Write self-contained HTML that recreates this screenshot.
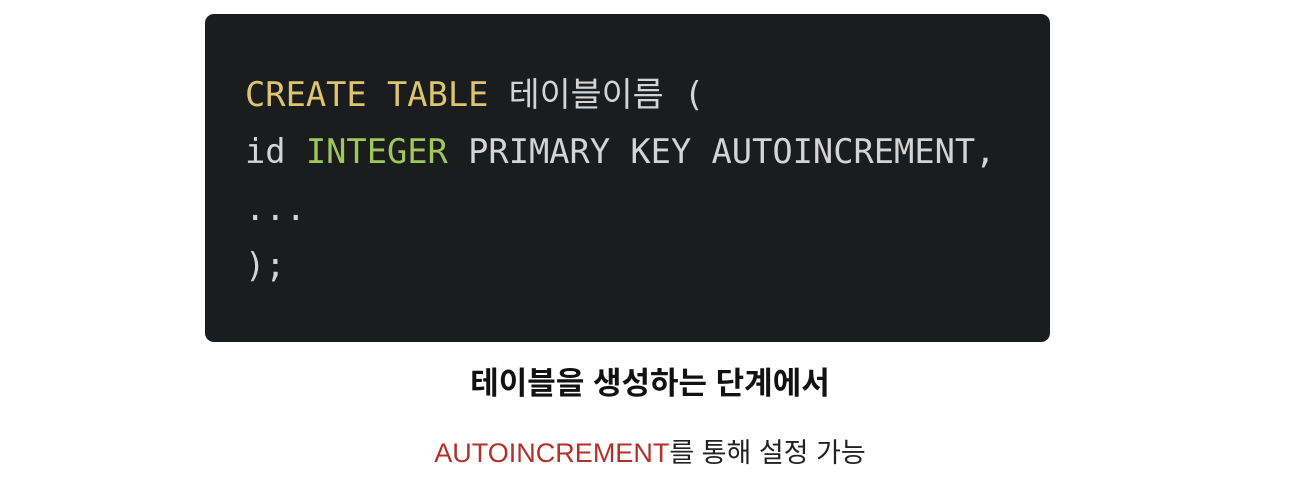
<!DOCTYPE html>
<html><head><meta charset="utf-8"><style>
html,body{margin:0;padding:0;background:#fff;width:1300px;height:481px;overflow:hidden}
.box{position:absolute;left:205px;top:14px;width:845px;height:328px;background:#1b1c1e;border-radius:9px}
.code{position:absolute;left:245px;top:66px;font-family:"DejaVu Sans Mono","Noto Sans CJK KR",monospace;font-size:33.7px;line-height:57px;color:#d4d4d4;white-space:pre}
.y{color:#dcc56e}.g{color:#9fc75a}
.c1{position:absolute;left:0;width:1300px;top:366px;text-align:center;font-family:"Liberation Sans","Noto Sans CJK KR",sans-serif;font-weight:bold;font-size:31px;line-height:36px;color:#111}
.c2{position:absolute;left:0;width:1300px;top:431px;text-align:center;font-family:"Liberation Sans","Noto Sans CJK KR",sans-serif;font-size:27px;color:#222}
.r{color:#b3302b}
</style></head><body>
<div class="box"></div>
<div class="code"><span class="y">CREATE TABLE</span> 테이블이름 (
id <span class="g">INTEGER</span> PRIMARY KEY AUTOINCREMENT,
...
);</div>
<div class="c1">테이블을 생성하는 단계에서</div>
<div class="c2"><span class="r">AUTOINCREMENT</span>를 통해 설정 가능</div>
</body></html>
